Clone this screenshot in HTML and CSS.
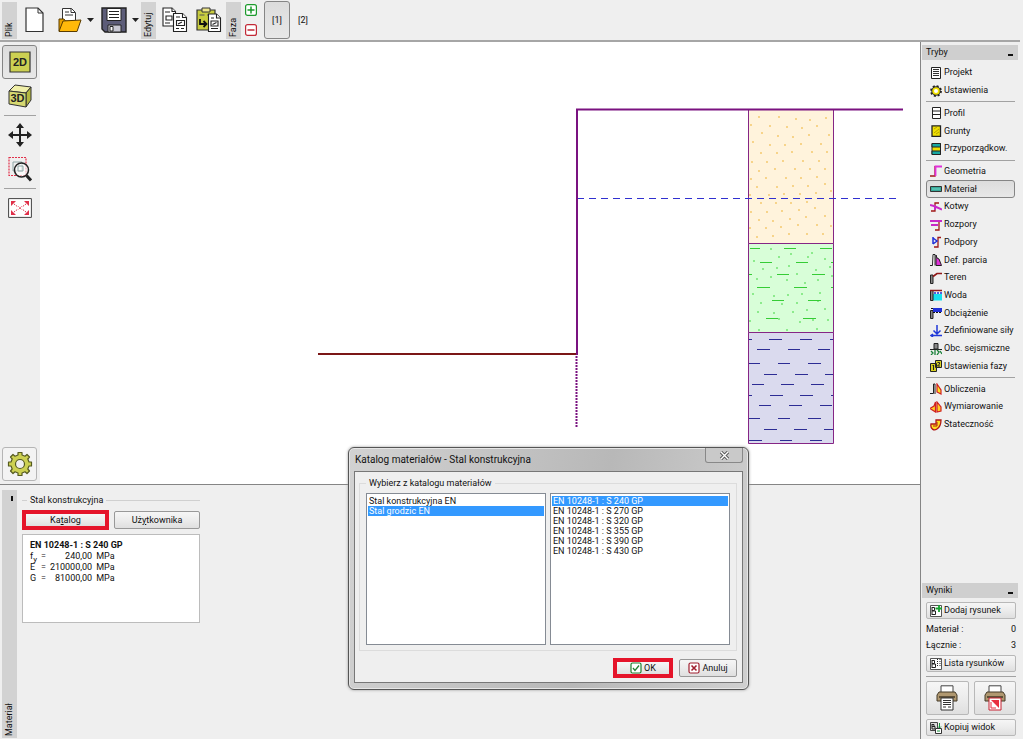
FILE: index.html
```html
<!DOCTYPE html>
<html lang="pl">
<head>
<meta charset="utf-8">
<title>Stal konstrukcyjna</title>
<link rel="stylesheet" href="styles.css">
</head>
<body>
<div class="app">
  <header class="toolbar">
    <span class="strip">Plik</span>
    <button class="tool tool-new" aria-label="Nowy"><svg width="20" height="26" viewBox="0 0 20 26"><path d="M1 1h12l5 5v18.500H1z" fill="#fff" stroke="#333" stroke-width="1.200"/><path d="M13 1v5h5" fill="none" stroke="#333"/></svg></button>
    <button class="tool tool-open" aria-label="Otwórz"><svg width="24" height="26" viewBox="0 0 24 26"><path d="M4.500 13V1.500h9l4 4V13" fill="#fff" stroke="#333"/><path d="M13 1.500v4h4M7 5h4M7 8h8" fill="none" stroke="#333"/><path d="M1 24V12h5l1.500 2H18v2" fill="#e8a200" stroke="#5a3c00"/><path d="M1 24.500 5 14l18-1-4 11.500z" fill="#ffb90a" stroke="#5a3c00"/></svg></button>
    <button class="tool drop" aria-label="Lista otwierania"><svg width="7" height="4" viewBox="0 0 7 4"><path d="M0 0h7L3.500 4z" fill="#222"/></svg></button>
    <button class="tool tool-save" aria-label="Zapisz"><svg width="26" height="26" viewBox="0 0 26 26"><path d="M1 1h24v24H4l-3-3z" fill="#5c5c78" stroke="#222" stroke-width="1.400"/><path d="M6 1.500h14v12H6z" fill="#fff" stroke="#222"/><path d="M8 4.500h10M8 7.500h10M8 10.500h10" stroke="#222"/><path d="M7 18h13v7H7z" fill="#c9c9d4" stroke="#222"/><path d="M9 19.500h3V24H9z" fill="#fff" stroke="#222"/></svg></button>
    <button class="tool drop" aria-label="Lista zapisywania"><svg width="7" height="4" viewBox="0 0 7 4"><path d="M0 0h7L3.500 4z" fill="#222"/></svg></button>
    <span class="strip strip-edit">Edytuj</span>
    <button class="tool tool-copy" aria-label="Kopiuj"><svg width="26" height="26" viewBox="0 0 26 26"><g fill="#fff" stroke="#222" stroke-width="1.100"><path d="M1 1h9l3.500 3.500V19H1z"/><path d="M10 1v3.500h3.500M3 5h5M3 16h5M4 9h6v4H4z"/><path d="M11.500 6.500h9l4 4v14h-13z"/><path d="M20.500 6.500v4h4M14 10h4M14 21.500h3M19 21.500h3M14.500 13.500h8v5h-8zM16 17l4-2"/></g></svg></button>
    <button class="tool tool-paste" aria-label="Wklej"><svg width="26" height="26" viewBox="0 0 26 26"><path d="M1 3h18v20H1z" fill="#c8cc3e" stroke="#333" stroke-width="1.200"/><path d="M6 1h8v4H6z" fill="#eee68a" stroke="#333"/><path d="M3.500 8h5M11 8h5" stroke="#555"/><path d="M4 12v5h6M7.500 14l3 3-3 3" fill="none" stroke="#111" stroke-width="1.800"/><g fill="#fff" stroke="#222" stroke-width="1.100"><path d="M12.500 7h8l4 4v13.500h-12z"/><path d="M20.500 7v4h4M15 11h3M15 21.500h7M15 14h7v5h-7zM16.500 17.500l4-2"/></g></svg></button>
    <span class="strip strip-phase">Faza</span>
    <span class="phase-edit">
      <button class="tool" aria-label="Dodaj fazę"><svg width="12" height="12" viewBox="0 0 12 12"><rect x=".6" y=".6" width="10.800" height="10.800" rx="2" fill="#fff" stroke="#1c9a2c" stroke-width="1.200"/><path d="M6 2.500v7M2.500 6h7" stroke="#1c9a2c" stroke-width="1.500"/></svg></button>
      <button class="tool" aria-label="Usuń fazę"><svg width="12" height="12" viewBox="0 0 12 12"><rect x=".6" y=".6" width="10.800" height="10.800" rx="2" fill="#fff" stroke="#c22836" stroke-width="1.200"/><path d="M2.500 6h7" stroke="#c22836" stroke-width="1.500"/></svg></button>
    </span>
    <button class="phase pressed">[1]</button>
    <button class="phase">[2]</button>
  </header>

  <div class="body">
    <main class="work">
      <section class="view">
        <nav class="rail" aria-label="Widok">
          <button class="rail-btn pressed" aria-label="2D"><svg width="22" height="22" viewBox="0 0 22 22"><path d="M1 1h20v20H1z" fill="#ccd052" stroke="#333" stroke-width="1.200"/><text x="11" y="15" text-anchor="middle" class="icon-text">2D</text></svg></button>
          <button class="rail-btn" aria-label="3D"><svg width="24" height="24" viewBox="0 0 24 24"><path d="M1 7 7 1l16 2-5 6z" fill="#f0efa8" stroke="#333"/><path d="M18 9l5-6v13l-5 7z" fill="#b4b840" stroke="#333"/><path d="M1 7l17 2v14L1 20z" fill="#d6d870" stroke="#333"/><text x="9.500" y="18" text-anchor="middle" class="icon-text">3D</text></svg></button>
          <hr>
          <button class="rail-btn" aria-label="Przesuń"><svg width="24" height="24" viewBox="0 0 24 24"><path d="M12 3v18M3 12h18" stroke="#222" stroke-width="2"/><path d="M12 0l4 5H8zM12 24l4-5H8zM0 12l5-4v8zM24 12l-5-4v8z" fill="#222"/></svg></button>
          <button class="rail-btn" aria-label="Powiększ"><svg width="24" height="26" viewBox="0 0 24 26"><path d="M1 1.500h17v18H1z" fill="none" stroke="#e0304a" stroke-width="1.200" stroke-dasharray="2 1"/><path d="M5 6h9v9H5z" fill="none" stroke="#8fa6a6"/><circle cx="13.500" cy="14" r="7" fill="#fff" fill-opacity=".6" stroke="#222" stroke-width="1.500"/><path d="M10 10h5v5h-5z" fill="none" stroke="#8fa6a6"/><path d="M18.500 19.500l4.500 5" stroke="#222" stroke-width="3"/></svg></button>
          <hr>
          <button class="rail-btn" aria-label="Pokaż wszystko"><svg width="24" height="20" viewBox="0 0 24 20"><path d="M.6.6h22.800v18.800H.6z" fill="#fff" stroke="#444"/><g fill="#e0304a"><path d="M3 3h5L3 8zM21 3v5l-5-5zM3 17v-5l5 5zM21 17h-5l5-5z"/></g><path d="M6 6l4 3M18 6l-4 3M6 14l4-3M18 14l-4-3M10.500 8.500l3 3M13.500 8.500l-3 3" stroke="#e0304a" stroke-dasharray="1.500 1"/></svg></button>
          <button class="rail-btn rail-gear" aria-label="Ustawienia widoku"><svg width="26" height="26" viewBox="-13 -13 26 26"><g fill="#ccd052" stroke="#555a20" stroke-width="1.200" stroke-linejoin="round"><path d="M-2-9-2-11.500h4L2-9 5-7.800 7-9.500 9.500-7 7.800-5 9-2h2.500v4H9L7.800 5 9.500 7 7 9.500 5 7.800 2 9v2.500h-4V9L-5 7.800-7 9.500-9.500 7-7.800 5-9 2h-2.500v-4H-9l1.200-3L-9.500-7-7-9.500-5-7.800z"/><circle r="4.500" fill="#efefef"/></g></svg></button>
        </nav>
        <svg class="drawing" viewBox="40 42 880 442" preserveAspectRatio="xMinYMin meet" role="img" aria-label="Przekrój konstrukcji">
          <g stroke="#852585" stroke-width="1">
            <path d="M748.500 109.500h85v134h-85z" fill="#fff3dc"/>
            <path d="M748.500 243.500h85v89h-85z" fill="#d8fed8"/>
            <path d="M748.500 332.500h85v111h-85z" fill="#dadaee"/>
          </g>
          <path class="sand" d="M759 117h0M779 117h0M796 119h0M810 120h0M826 118h0M751 125h0M770 126h0M787 127h0M802 128h0M817 126h0M762 133h0M778 136h0M793 137h0M809 135h0M829 135h0M753 142h0M770 145h0M785 145h0M801 144h0M821 144h0M761 153h0M777 153h0M792 152h0M812 152h0M827 152h0M752 162h0M767 162h0M783 161h0M803 161h0M819 161h0M759 171h0M775 169h0M795 169h0M810 169h0M825 169h0M751 179h0M766 178h0M786 178h0M801 178h0M817 177h0M757 187h0M777 187h0M793 186h0M808 186h0M825 184h0M750 195h0M769 195h0M784 194h0M800 194h0M816 193h0M761 203h0M776 203h0M791 203h0M807 202h0M831 191h0M751 212h0M767 212h0M782 211h0M799 210h0M815 208h0M759 220h0M773 221h0M790 219h0M806 217h0M825 216h0M750 228h0M766 228h0M781 227h0M798 225h0M817 225h0M757 237h0M773 236h0M789 234h0M807 234h0M823 234h0M831 226h0"/>
          <path class="silt-dots" d="M771 249h0M791 254h0M812 253h0M754 261h0M779 257h0M789 266h0M808 257h0M825 259h0M763 269h0M777 268h0M797 274h0M816 270h0M830 267h0M757 279h0M771 277h0M787 280h0M805 283h0M818 280h0M832 276h0M753 294h0M774 296h0M788 295h0M802 294h0M820 293h0M761 303h0M782 304h0M797 303h0M818 301h0M758 312h0M774 313h0M793 312h0M807 310h0M825 309h0M750 321h0M779 319h0M800 322h0M813 320h0M828 320h0M759 330h0M787 330h0M817 329h0"/>
          <path class="silt" d="M750 248.500h10M784 248.500h12M820 248.500h12M760 262.500h12M796 262.500h12M831 262.500h2M749 274.500h3M777 274.500h12M812 274.500h13M757 287.500h13M794 287.500h13M831 287.500h2M772 300.500h12M808 300.500h13M766 318.500h12M803 318.500h13"/>
          <path class="clay" d="M749 339.500h3M769 339.500h13M800 339.500h12M830 339.500h3M757 349.500h13M788 349.500h12M818 349.500h12M749 363.500h11M778 363.500h12M808 363.500h13M764 374.500h13M795 374.500h13M825 374.500h8M752 384.500h12M781 384.500h13M811 384.500h13M749 395.500h3M770 395.500h13M800 395.500h13M831 395.500h2M759 405.500h12M789 405.500h13M820 405.500h12M749 418.500h11M778 418.500h12M808 418.500h13M764 429.500h13M794 429.500h13M824 429.500h9M749 440.500h13M780 440.500h12M810 440.500h12"/>
          <path d="M577 198.500h323" stroke="#3030d0" stroke-dasharray="7 5"/>
          <path d="M318 354h259" stroke="#7b1616" stroke-width="2"/>
          <path d="M577 355V109.500H903" stroke="#7a1280" stroke-width="2" fill="none"/>
          <path d="M576.500 356v72" stroke="#7a1280" stroke-width="2" stroke-dasharray="2 1"/>
        </svg>
      </section>

      <section class="panel">
        <div class="panel-strip"><span class="pin"></span><span>Materiał</span></div>
        <div class="steel">
          <h2 class="legend">Stal konstrukcyjna</h2>
          <div class="steel-actions">
            <button class="btn marked"><span>Ka<u>t</u>alog</span></button>
            <button class="btn"><span>Uż<u>y</u>tkownika</span></button>
          </div>
          <div class="steel-data">
            <strong>EN 10248-1 : S 240 GP</strong>
            <table>
              <tr><td>f<sub>y</sub></td><td>=</td><td class="num">240,00</td><td>MPa</td></tr>
              <tr><td>E</td><td>=</td><td class="num">210000,00</td><td>MPa</td></tr>
              <tr><td>G</td><td>=</td><td class="num">81000,00</td><td>MPa</td></tr>
            </table>
          </div>
        </div>
      </section>
    </main>

    <aside class="side">
      <h2 class="side-title">Tryby<span class="min"></span></h2>
      <nav class="modes" aria-label="Tryby">
        <button class="mode"><svg viewBox="0 0 12 12"><path d="M1.500.5h9v11h-9z" fill="#fff" stroke="#222"/><path d="M3 2.500h6M3 4.500h6M3 6.500h6M3 8.500h6" stroke="#333"/></svg>Projekt</button>
        <button class="mode"><svg viewBox="0 0 12 12"><circle cx="6" cy="6" r="4.900" fill="none" stroke="#222" stroke-width="2" stroke-dasharray="2 1.850"/><circle cx="6" cy="6" r="3.200" fill="#fff" stroke="#222" stroke-width="3"/><circle cx="6" cy="6" r="2.900" fill="#fff" stroke="#f0e000" stroke-width="1.800"/></svg>Ustawienia</button>
        <hr>
        <button class="mode"><svg viewBox="0 0 12 12"><path d="M2.500.5h8v11h-8zM2.500 4h8M2.500 7.500h8" fill="#fff" stroke="#222"/></svg>Profil</button>
        <button class="mode"><svg viewBox="0 0 12 12"><path d="M2 .8h8.500v10.500H2z" fill="#f0e000" stroke="#222" stroke-width="1.300"/><path d="M4 4l3-2M4 8l5-4M6 9l3-2" stroke="#b5a000"/></svg>Grunty</button>
        <button class="mode"><svg viewBox="0 0 12 12"><path d="M2 .5h8.500v11H2z" fill="#f0e000" stroke="#222"/><path d="M2 .5h8.500V4H2zM2 8h8.500v3.500H2z" fill="#18a8a0" stroke="#222"/></svg>Przyporządkow.</button>
        <hr>
        <button class="mode"><svg viewBox="0 0 12 12"><path d="M0 11h5V1" fill="none" stroke="#a01818" stroke-width="1.300"/><path d="M5.500 11V1.500H12" fill="none" stroke="#e030d8" stroke-width="1.800"/></svg>Geometria</button>
        <button class="mode pressed"><svg viewBox="0 0 12 12"><path d="M.5 3.500h11v5H.5z" fill="#38a898" stroke="#333"/><path d="M2 6h8" stroke="#70d8c8"/></svg>Materiał</button>
        <button class="mode"><svg viewBox="0 0 12 12"><path d="M1 10h4V2h4" fill="none" stroke="#a01818" stroke-width="1.300"/><path d="M0 4l4 1 8 3.500M5 5.500V9" fill="none" stroke="#c828c8" stroke-width="2"/></svg>Kotwy</button>
        <button class="mode"><svg viewBox="0 0 12 12"><path d="M9 2v9H5" fill="none" stroke="#a01818" stroke-width="1.300"/><path d="M0 2h12M1 6h7" stroke="#c828c8" stroke-width="1.800"/></svg>Rozpory</button>
        <button class="mode"><svg viewBox="0 0 12 12"><path d="M11 1.500H8V11H4" fill="none" stroke="#a01818" stroke-width="1.300"/><path d="M3 1v7M3 2l4 3-4 3" fill="none" stroke="#2030d8" stroke-width="1.500"/></svg>Podpory</button>
        <button class="mode"><svg viewBox="0 0 12 12"><path d="M0 11.500h2.500L3 .5h2v11" fill="#fff" stroke="#222"/><path d="M6 1l1 3 2 1 2.500 6.500H6z" fill="#e030d8" stroke="#222"/></svg>Def. parcia</button>
        <button class="mode"><svg viewBox="0 0 12 12"><path d="M.5 3h2.500v8.500H.5z" fill="#888" stroke="#222"/><path d="M3 4.500 7 1.500h5" fill="none" stroke="#901818" stroke-width="1.700"/></svg>Teren</button>
        <button class="mode"><svg viewBox="0 0 12 12"><path d="M3 5h9v6.500H3z" fill="#18e0f0"/><path d="M.5 1.500H3v10H.5z" fill="#888" stroke="#222"/><path d="M0 1.500h12" stroke="#901818" stroke-width="1.500"/><path d="M4 4h8" stroke="#2030d8" stroke-width="1.500" stroke-dasharray="2 1"/></svg>Woda</button>
        <button class="mode"><svg viewBox="0 0 12 12"><path d="M.5 3.500H3v8H.5z" fill="#888" stroke="#222"/><path d="M3 1h9v4H3z" fill="#2030d8"/><path d="M1 1.500h2M3 5.500h9" stroke="#111" stroke-dasharray="2 1"/></svg>Obciążenie</button>
        <button class="mode"><svg viewBox="0 0 12 12"><path d="M7 0v8M3.500 5.500 7 9l3.500-3.500M1 10.500h11M3 9l-2 1.500L3 12" fill="none" stroke="#2038d8" stroke-width="1.500"/></svg>Zdefiniowane siły</button>
        <button class="mode"><svg viewBox="0 0 12 12"><path d="M4 .5h4V6H4z" fill="#888" stroke="#222"/><path d="M0 6.500h12" stroke="#222"/><path d="M1 8l2 2-2 2M5 7v5M7 7l2 2-2 3M10 8l2 3" fill="none" stroke="#188038" stroke-width="1.300"/></svg>Obc. sejsmiczne</button>
        <button class="mode"><svg viewBox="0 0 12 12"><path d="M5.500.5h6v7h-6zM.5 3.500h6v8h-6z" fill="#d8d020" stroke="#222"/><path d="M2.500 6l1-1v5M7.500 2.500h2v1.500l-2 2h2.500" fill="none" stroke="#222"/></svg>Ustawienia fazy</button>
        <hr>
        <button class="mode"><svg viewBox="0 0 12 12"><path d="M0 10.500h3.500V1H5v10" fill="none" stroke="#222"/><path d="M7 1l4 6v4L7 9z" fill="#ffe020" stroke="#d02020" stroke-width="1.200"/></svg>Obliczenia</button>
        <button class="mode"><svg viewBox="0 0 12 12"><path d="M5.500 1v10L0 7.500 4 5zM7 1v10l4-1V6z" fill="#ffd020" stroke="#d02020" stroke-width="1.200"/></svg>Wymiarowanie</button>
        <button class="mode"><svg viewBox="0 0 12 12"><path d="M1 5c-1 5 3 7 6 5s4-5 4-9H6v4z" fill="#ffe020" stroke="#b01818" stroke-width="1.300"/><path d="M3 7h4V3" fill="none" stroke="#b01818"/></svg>Stateczność</button>
      </nav>
      <h2 class="side-title results-title">Wyniki<span class="min"></span></h2>
      <div class="results">
        <button class="btn wide"><svg viewBox="0 0 12 12"><path d="M.5.500H11.500v11H.5z" fill="#fff" stroke="#555"/><path d="M2 2v8M2 2.500h2.500v3H2M2 6h3.500v3.500H2" fill="none" stroke="#222"/><path d="M9 0v7M5.500 3.500H12" stroke="#18a030" stroke-width="1.800"/></svg>Dodaj rysunek</button>
        <p class="count"><span>Materiał :</span><span>0</span></p>
        <p class="count"><span>Łącznie :</span><span>3</span></p>
        <button class="btn wide"><svg viewBox="0 0 12 12"><path d="M.5.500H11.500v11H.5z" fill="#fff" stroke="#555"/><path d="M2 2v8M2 2.500h2.500v3H2M2 6h3.500v3.500H2" fill="none" stroke="#222"/><path d="M7.500 1v8M10 1v8" stroke="#222" stroke-dasharray="1 1"/></svg>Lista rysunków</button>
        <hr>
        <div class="print">
          <button class="btn" aria-label="Drukuj"><svg width="22" height="26" viewBox="0 0 22 26"><path d="M5 .8h12V8H5z" fill="#fff" stroke="#444"/><path d="M3 7h16l2 3v6H1v-6z" fill="#b09870" stroke="#443a28"/><path d="M3 12h16" stroke="#443a28" stroke-width="1.500"/><path d="M5 13h12v12H5z" fill="#fff" stroke="#333"/><path d="M7 15.500h8M7 17.500h8M7 19.500h8M7 22h3M12 22h3" stroke="#333"/></svg></button>
          <button class="btn" aria-label="Drukuj rysunek"><svg width="22" height="26" viewBox="0 0 22 26"><path d="M5 .8h12V8H5z" fill="#fff" stroke="#444"/><path d="M3 7h16l2 3v6H1v-6z" fill="#b09870" stroke="#443a28"/><path d="M3 12h16" stroke="#443a28" stroke-width="1.500"/><path d="M5 13h12v12H5z" fill="#fff" stroke="#c82030"/><path d="M7 15h8v8z" fill="#e83040"/><path d="M7 17v6h5" fill="none" stroke="#e83040"/></svg></button>
        </div>
        <button class="btn wide"><svg viewBox="0 0 12 12"><path d="M.5.500h7v8h-7z" fill="#ddd" stroke="#444"/><path d="M2 2v5M2 2.500h2v2H2M2 4.500h3V7H2" fill="none" stroke="#222"/><path d="M5.500 6.500h6v5h-6z" fill="#fff" stroke="#333"/><path d="M9.500 1v5M8 4.500 9.500 6 11 4.500M7 9h3" fill="none" stroke="#18903a"/></svg>Kopiuj widok</button>
      </div>
    </aside>
  </div>

  <div class="dialog" role="dialog" aria-labelledby="dlg-title">
    <header class="dialog-bar">
      <h1 id="dlg-title">Katalog materiałów - Stal konstrukcyjna</h1>
      <button class="close" aria-label="Zamknij"><svg width="11" height="9" viewBox="0 0 11 9"><path d="M2 1l7 7M9 1L2 8" stroke="#555" stroke-width="3.200"/><path d="M2 1l7 7M9 1L2 8" stroke="#fff" stroke-width="1.400"/></svg></button>
    </header>
    <div class="dialog-body">
      <fieldset>
        <legend>Wybierz z katalogu materiałów</legend>
        <div class="lists">
          <select size="12" aria-label="Katalog"><option>Stal konstrukcyjna EN</option><option selected>Stal grodzic EN</option></select>
          <select size="12" aria-label="Materiał"><option selected>EN 10248-1 : S 240 GP</option><option>EN 10248-1 : S 270 GP</option><option>EN 10248-1 : S 320 GP</option><option>EN 10248-1 : S 355 GP</option><option>EN 10248-1 : S 390 GP</option><option>EN 10248-1 : S 430 GP</option></select>
        </div>
      </fieldset>
      <div class="dialog-actions">
        <button class="btn marked"><svg viewBox="0 0 12 12"><rect x="1" y="1" width="10" height="10" rx="1.500" fill="#fff" stroke="#208030" stroke-width="1.200"/><path d="M3 6l2 2.500L9 3.500" fill="none" stroke="#208030" stroke-width="1.300"/></svg>OK</button>
        <button class="btn"><svg viewBox="0 0 12 12"><rect x="1" y="1" width="10" height="10" rx="1.500" fill="#fff" stroke="#a02030" stroke-width="1.200"/><path d="M3.500 3.500l5 5M8.500 3.500l-5 5" stroke="#a02030" stroke-width="1.600"/></svg>Anuluj</button>
      </div>
    </div>
  </div>
</div>
</body>
</html>
```

FILE: styles.css
```css
* { box-sizing: border-box; }

body, h1, h2, p { margin: 0; }

body, button, select {
  font-family: Roboto, "Noto Sans", sans-serif;
  font-size: 9px;
  line-height: 11px;
  color: #111;
}

h1, h2 { font-size: inherit; font-weight: normal; }

button { border: 0; background: none; padding: 0; }

svg { display: block; flex: none; }

hr {
  width: auto;
  border: 0;
  height: 1px;
  background: #a2a2a2;
}

.app {
  position: relative;
  display: flex;
  flex-direction: column;
  height: 100vh;
  padding-right: 3px;
  background: #efefef;
  overflow: hidden;
}

/* Top toolbar */
.toolbar {
  display: flex;
  align-items: center;
  height: 42px;
  padding-left: 2px;
  border-bottom: 2px solid #a6a6a6;
}

.strip {
  writing-mode: vertical-rl;
  transform: rotate(180deg);
  width: 15px;
  height: 37px;
  padding-top: 2px;
  line-height: 15px;
  background: #d2d2d2;
}

.tool-new { margin-left: 8px; }
.tool-open { margin-left: 13px; }
.tool-save { margin-left: 7px; }
.tool-copy { margin-left: 6px; }
.tool-paste { margin-left: 8px; }
.drop { margin-left: 5px; }
.strip-edit { margin-left: 2px; }
.strip-phase { margin-left: 4px; }

.phase-edit {
  display: grid;
  gap: 8px;
  margin: 0 7px 0 4px;
}

.phase { width: 26px; height: 38px; }

.pressed {
  border: 1px solid #858585;
  border-radius: 3px;
  background: linear-gradient(#dcdcdc, #e8e8e8);
}

/* Body split */
.body { display: flex; flex: 1; min-height: 0; }

.work { display: flex; flex: 1; flex-direction: column; min-width: 0; }

.view { display: flex; flex: 1; min-height: 0; background: #fff; }

.rail {
  display: flex;
  flex-direction: column;
  width: 40px;
  padding: 3px 2px;
  background: #efefef;
}

.rail-btn {
  display: grid;
  place-items: center;
  width: 35px;
  height: 34px;
}

.rail hr { width: 32px; margin: 2px; }

.rail-gear {
  margin-top: auto;
  border: 1px solid #b5b5b5;
  border-radius: 3px;
  background: #f3f3f3;
}

.icon-text {
  font: bold 11px "Liberation Sans", sans-serif;
  fill: #222;
}

.drawing { flex: 1; min-width: 0; height: 100%; }

.sand, .silt-dots { fill: none; stroke-linecap: square; stroke-width: 1.4; }
.sand { stroke: #f0b840; }
.silt-dots { stroke: #48d848; }
.silt { stroke: #35cc35; }
.clay { stroke: #2c2c94; }

/* Lower material panel */
.panel {
  display: flex;
  gap: 5px;
  height: 255px;
  padding: 5px 0 1px 2px;
  border-top: 1px solid #858585;
}

.panel-strip {
  display: flex;
  justify-content: space-between;
  writing-mode: vertical-rl;
  width: 15px;
  padding: 6px 0 2px;
  line-height: 15px;
  background: #d2d2d2;
}

.panel-strip span { transform: rotate(180deg); }

.pin { width: 2px; height: 5px; margin-right: 4px; background: #111; }

.steel { width: 178px; padding-top: 5px; }

.legend { display: flex; align-items: center; gap: 3px; }
.legend::before, .legend::after { content: ""; height: 1px; background: #d0d0d0; }
.legend::before { width: 5px; }
.legend::after { flex: 1; }

.btn {
  display: flex;
  align-items: center;
  justify-content: center;
  gap: 2px;
  height: 18px;
  border: 1px solid #989898;
  border-radius: 2px;
  background: linear-gradient(#f6f6f6, #ececec 50%, #dfdfdf);
}

.btn svg[viewBox="0 0 12 12"], .mode svg { width: 12px; height: 12px; }

.marked { border: 4px solid #e5142a; border-radius: 0; height: 20px; }

.steel-actions {
  display: grid;
  grid-template-columns: 87px 86px;
  align-items: center;
  gap: 5px;
  margin-top: 4px;
}

.steel-data {
  height: 89px;
  margin-top: 4px;
  padding: 5px 7px;
  border: 1px solid #bcbcbc;
  background: #fff;
}

.steel-data table { border-collapse: collapse; }
.steel-data td { padding: 0 4px 0 0; vertical-align: baseline; }
.steel-data td.num { min-width: 46px; text-align: right; }
.steel-data sub { line-height: 0; font-size: 8px; }

/* Right column */
.side {
  display: flex;
  flex-direction: column;
  width: 100px;
  padding: 3px 2px 3px 1px;
  border-left: 1px solid #858585;
}

.side-title {
  display: flex;
  align-items: center;
  justify-content: space-between;
  height: 15px;
  padding: 0 5px 0 4px;
  background: #cfcfcf;
}

.min { width: 5px; height: 2px; margin-top: 5px; background: #111; }

.modes {
  display: flex;
  flex-direction: column;
  height: 50vh;
  margin-top: 4px;
  padding: 0 3px 0 4px;
}

.modes hr { width: 100%; margin: 2px 0; }

.mode {
  display: flex;
  flex: 1;
  align-items: center;
  gap: 2px;
  padding-left: 3px;
  border: 1px solid transparent;
  white-space: nowrap;
}

.mode.pressed { border-color: #858585; }

.results-title { margin-top: auto; }

.results {
  display: grid;
  gap: 4px;
  padding: 4px 2px 0 4px;
}

.results hr { width: 100%; margin: 0; }

.wide { justify-content: flex-start; height: 17px; padding-left: 3px; border-color: #b8b8b8; white-space: nowrap; }

.count { display: flex; justify-content: space-between; height: 12px; line-height: 12px; }

.print { display: grid; grid-template-columns: 1fr 1fr; gap: 5px; }

.print .btn { height: 34px; border-color: #b8b8b8; }

/* Dialog window */
.dialog {
  position: absolute;
  left: 348px;
  top: 447px;
  width: 401px;
  padding: 0 5px 6px;
  border: 1px solid #555;
  border-radius: 6px;
  background: linear-gradient(100deg, #d2d2d2, #b8b8b8 60%, #d0d0d0);
  box-shadow: inset 0 0 0 1px #e6e6e6, 0 0 3px #999;
}

.dialog-bar {
  display: flex;
  align-items: flex-start;
  justify-content: space-between;
  height: 23px;
  padding-left: 1px;
}

.dialog-bar h1 { font-size: 10px; line-height: 24px; }

.close {
  display: grid;
  place-items: center;
  width: 38px;
  height: 15px;
  border: 1px solid #888;
  border-top: 0;
  border-radius: 0 0 3px 3px;
  background: #c9c9c9;
}

.dialog-body {
  padding: 6px 5px 4px 4px;
  border: 1px solid #777;
  background: #efefef;
}

fieldset {
  margin: 0;
  padding: 4px 6px 5px;
  border: 1px solid #dcdcdc;
}

legend { padding: 0 3px; }

.lists { display: grid; grid-template-columns: 1fr 1fr; gap: 4px; }

select {
  height: 152px;
  padding: 2px 1px;
  border: 1px solid #858b94;
  border-radius: 0;
  background: #fff;
  overflow: hidden;
  outline: 0;
}

option {
  min-height: 0;
  padding: 0 1px;
  line-height: 10px;
}

option:checked { color: #fff; background: #3399ff linear-gradient(#3399ff, #3399ff); }

.dialog-actions {
  display: grid;
  grid-template-columns: 60px 58px;
  align-items: center;
  justify-content: end;
  gap: 6px;
  margin-top: 7px;
}
```
